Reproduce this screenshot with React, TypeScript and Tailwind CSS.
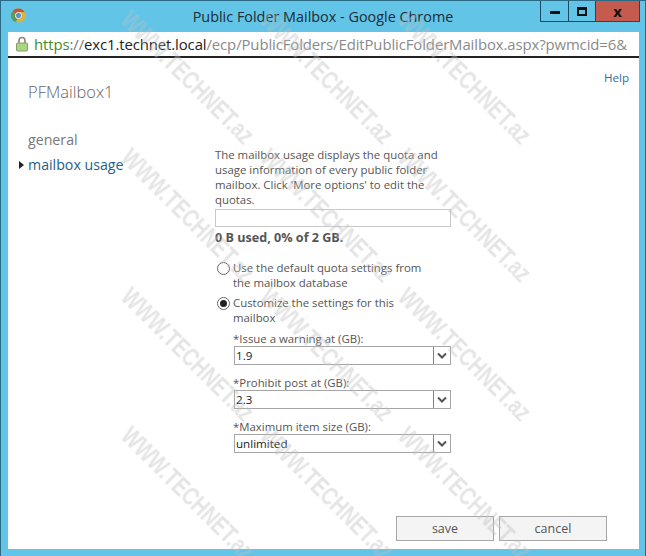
import React from "react";

const font = "font-['Open_Sans','Noto_Sans',sans-serif]";

const marks: [number, number][] = [];
for (const x of [134, 273, 411]) {
  for (const y of [5, 143, 282, 421]) {
    marks.push([x, y]);
  }
}

function Watermarks() {
  return (
    <div className="pointer-events-none absolute inset-0 overflow-hidden">
      {marks.map(([x, y]) => (
        <div
          key={`${x}-${y}`}
          className="absolute origin-top-left rotate-[45deg] scale-x-[0.75] whitespace-nowrap font-['Liberation_Sans',sans-serif] text-[26px] leading-none font-bold text-[#bdbdbd]/40 blur-[0.6px]"
          style={{ left: x, top: y }}
        >
          WWW.TECHNET.az
        </div>
      ))}
    </div>
  );
}

function Select({ value }: { value: string }) {
  return (
    <div className="flex h-[19px] w-[217px] items-center justify-between border border-[#a6a6a6] bg-white text-[11.6px] text-[#222]">
      <span className="pl-px">{value}</span>
      <span className="flex h-[17px] w-[17px] items-center justify-center border-l border-[#808080]">
        <svg width="10" height="7" viewBox="0 0 10 7">
          <path d="M1 1.5 L5 5.5 L9 1.5" fill="none" stroke="#555" strokeWidth="2" />
        </svg>
      </span>
    </div>
  );
}

function Radio({ checked, children }: { checked?: boolean; children: React.ReactNode }) {
  return (
    <div className="flex items-start gap-[3px] pl-[2px]">
      <span className="mt-[2px] flex size-[13px] shrink-0 items-center justify-center rounded-full border border-[#666] bg-white">
        {checked && <span className="size-[7px] rounded-full bg-[#222]" />}
      </span>
      <span className="w-[200px] leading-[15px]">{children}</span>
    </div>
  );
}

function Field({ label, value }: { label: string; value: string }) {
  return (
    <div className="flex flex-col">
      <div className="-ml-px h-[15px] leading-[15px]">{label}</div>
      <Select value={value} />
    </div>
  );
}

export default function App() {
  return (
    <div className={`relative flex h-[556px] w-[646px] flex-col overflow-hidden border-x border-t border-[#2a6a85] bg-[#62c5e8] ${font}`}>
      {/* title bar */}
      <div className="relative flex h-[31px] shrink-0 items-center justify-center">
        <svg className="absolute left-[10px] top-[7px]" width="15" height="15" viewBox="0 0 16 16">
          <circle cx="8" cy="8" r="7.5" fill="#d8b33c" />
          <path d="M8 .5A7.5 7.5 0 0 1 14.5 4.3H8A3.7 3.7 0 0 0 4.6 6.4L2 2.9A7.5 7.5 0 0 1 8 .5Z" fill="#c9523f" />
          <path d="M2 2.9 4.6 6.4A3.7 3.7 0 0 0 7 11.6L5 15A7.5 7.5 0 0 1 2 2.9Z" fill="#5a9a55" />
          <circle cx="8" cy="8" r="3.3" fill="#5f8fc4" stroke="#eee" strokeWidth="1" />
        </svg>
        <span className="text-[14.4px] text-[#1d2b36]">Public Folder Mailbox - Google Chrome</span>
        <div className="absolute right-[5px] top-0 flex h-[21px] border-x border-b border-[#1d4a5e]">
          <div className="flex w-[28px] items-center justify-center border-r border-[#1d4a5e]">
            <span className="mt-[3px] h-[3px] w-[10px] bg-[#111]" />
          </div>
          <div className="flex w-[27px] items-center justify-center border-r border-[#1d4a5e]">
            <span className="h-[9px] w-[10px] border-2 border-t-[3px] border-[#111]" />
          </div>
          <div className="flex w-[43px] items-center justify-center bg-[#c55a4e] text-[15px] font-bold leading-none text-[#111]">
            x
          </div>
        </div>
      </div>

      {/* address bar */}
      <div className="ml-[7px] mr-[6px] flex h-[26px] shrink-0 items-center border-b-2 border-[#222] bg-white pl-[8px]">
        <svg className="mr-[6px] shrink-0" width="12" height="16" viewBox="0 0 12 16">
          <path d="M3 7V4.5a3 3 0 0 1 6 0V7" fill="none" stroke="#8a8a78" strokeWidth="1.6" />
          <rect x="0.5" y="7" width="11" height="8" rx="1" fill="#a9d77f" stroke="#8a9a70" />
        </svg>
        <span className="whitespace-nowrap text-[14.9px] tracking-[-0.1px]">
          <span className="text-[#3f8f2a]">https</span>
          <span className="text-[#777]">://</span>
          <span className="text-[#222]">exc1.technet.local</span>
          <span className="text-[#8a8a8a]">/ecp/PublicFolders/EditPublicFolderMailbox.aspx?pwmcid=6&amp;</span>
        </span>
      </div>

      {/* body */}
      <div className="ml-[7px] mr-[6px] mb-[7px] flex min-h-0 flex-1 flex-col bg-white">
        <div className="flex h-[22px] shrink-0 justify-end pr-[10px] pt-[12px] text-[11.6px] leading-[16px] text-[#2e6da4]">Help</div>
        <div className="pl-[20px] text-[16.5px] leading-[24px] font-light text-[#666]">PFMailbox1</div>
        <div className="flex min-h-0 flex-1">
          <nav className="w-[207px] shrink-0 pt-[26px] text-[14.2px]">
            <div className="pl-[20px] leading-[20px] text-[#777]">general</div>
            <div className="relative mt-[5px] pl-[20px] leading-[20px] text-[#1e5f8c]">
              <span className="absolute left-[11px] top-[6px] border-y-[4px] border-l-[5px] border-y-transparent border-l-[#222]" />
              mailbox usage
            </div>
          </nav>
          <main className="flex w-[236px] flex-col pt-[43px] text-[11.4px] text-[#555]">
            <p className="leading-[15px]">
              The mailbox usage displays the quota and usage information of every public folder mailbox. Click 'More options' to edit the quotas.
            </p>
            <div className="mt-[2px] h-[18px] border border-[#c8c8c8] bg-white" />
            <div className="mt-[3px] text-[12.6px] font-bold leading-[16px]">0 B used, 0% of 2 GB.</div>
            <div className="mt-[14px] flex flex-col gap-[5px]">
              <Radio>Use the default quota settings from the mailbox database</Radio>
              <Radio checked>Customize the settings for this mailbox</Radio>
            </div>
            <div className="mt-[6px] flex flex-col gap-[10px] pl-[19px]">
              <Field label="*Issue a warning at (GB):" value="1.9" />
              <Field label="*Prohibit post at (GB):" value="2.3" />
              <Field label="*Maximum item size (GB):" value="unlimited" />
            </div>
          </main>
        </div>
        <div className="flex h-[33px] shrink-0 justify-end gap-[5px] pr-[32px] text-[12.5px] text-[#555]">
          <button className="h-[25px] w-[98px] border border-[#a6a6a6] bg-[#f4f4f4] pt-[2px]">save</button>
          <button className="h-[25px] w-[108px] border border-[#a6a6a6] bg-[#f4f4f4] pt-[2px]">cancel</button>
        </div>
      </div>
      <Watermarks />
    </div>
  );
}
